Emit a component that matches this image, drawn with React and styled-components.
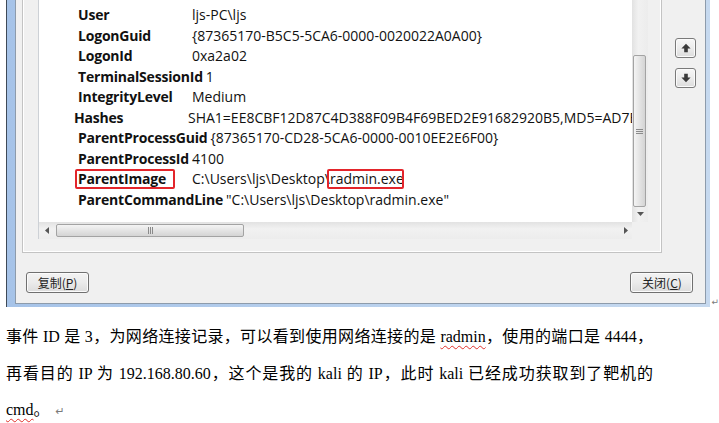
import React from 'react'
import styled, { createGlobalStyle } from 'styled-components'

const GlobalStyle = createGlobalStyle`
    html, body {
        margin: 0;
        padding: 0;
        background: #fff;
    }
    body {
        width: 719px;
        height: 423px;
        overflow: hidden;
    }
`

const Page = styled.div`
    width: 719px;
    height: 423px;
    overflow: hidden;
    background: #fff;
`

const WindowRow = styled.div`
    display: flex;
    align-items: flex-end;
    padding-left: 6px;
`

const Window = styled.div`
    width: 706px;
    height: 307px;
    box-sizing: border-box;
    display: flex;
    border-left: 1px solid #3f4a57;
    padding: 0 4px 3px 8px;
    background: linear-gradient(to right, #a6c3e8, #bcd3ee 60%, #c6d9ef);
`

const Client = styled.div`
    flex: 1;
    display: flex;
    flex-direction: column;
    background: #f0f0f0;
    border: 1px solid #8d9bab;
    border-top: none;
`

const Main = styled.div`
    display: flex;
    height: 253px;
`

const GroupBox = styled.div`
    width: 640px;
    margin-left: 6px;
    box-sizing: border-box;
    border: 1px solid #c3c3c3;
    border-top: none;
    box-shadow: inset 1px 0 0 #fff, inset -1px 0 0 #fff, inset 0 -1px 0 #fff;
    padding: 0 12px 13px 15px;
`

const TextBox = styled.div`
    width: 610px;
    height: 239px;
    box-sizing: border-box;
    display: grid;
    grid-template-columns: 1fr 16px;
    grid-template-rows: 1fr 17px;
    border-left: 1px solid #cdd1d6;
`

const Content = styled.div`
    background: #fff;
    overflow: hidden;
    padding: 5px 0 0 39px;
    font-family: "Open Sans", "Noto Sans", sans-serif;
    font-size: 14px;
    color: #111;
`

const Row = styled.div`
    display: flex;
    height: 20.5px;
    line-height: 20.5px;
    white-space: nowrap;
    margin-left: ${p => p.shift || 0}px;
`

const Label = styled.span`
    position: relative;
    font-weight: 700;
    min-width: ${p => p.min || 111}px;
    margin-right: 3px;
    letter-spacing: -0.2px;
`

const Value = styled.span`
    white-space: nowrap;
`

const Marked = styled.span`
    position: relative;
    &::after {
        content: '';
        position: absolute;
        left: ${p => p.left}px;
        width: ${p => p.w}px;
        top: 0;
        height: 20px;
        box-sizing: border-box;
        border: 2px solid #e3252b;
        border-radius: 2px;
    }
`

const VTrack = styled.div`
    position: relative;
    background: linear-gradient(to right, #e2e2e2, #f1f1f1 40%, #ececec);
`

const VThumb = styled.div`
    position: absolute;
    left: 1px;
    top: 55px;
    width: 13px;
    height: 152px;
    box-sizing: border-box;
    border: 1px solid #a3a3a3;
    border-radius: 2px;
    background: linear-gradient(to right, #f4f4f4, #e4e4e4 50%, #d4d4d4);
    display: flex;
    align-items: center;
    justify-content: center;
`

const HTrack = styled.div`
    position: relative;
    background: linear-gradient(#e2e2e2, #f1f1f1 40%, #ececec);
`

const HThumb = styled.div`
    position: absolute;
    top: 2px;
    left: 17px;
    width: 188px;
    height: 13px;
    box-sizing: border-box;
    border: 1px solid #a3a3a3;
    border-radius: 2px;
    background: linear-gradient(#f4f4f4, #e4e4e4 50%, #d4d4d4);
    display: flex;
    align-items: center;
    justify-content: center;
`

const Arrow = styled.svg`
    position: absolute;
    left: ${p => p.x}px;
    top: ${p => p.y}px;
`

const Corner = styled.div`
    background: #f0f0f0;
`

const Side = styled.div`
    flex: 1;
    display: flex;
    flex-direction: column;
    align-items: flex-start;
    gap: 10px;
    padding: 38px 0 0 13px;
`

const MoveButton = styled.div`
    width: 21px;
    height: 20px;
    box-sizing: border-box;
    border: 1px solid #7a7a7a;
    border-radius: 3px;
    background: linear-gradient(#f7f7f7, #ececec 50%, #dcdcdc);
    box-shadow: inset 0 0 0 1px #fbfbfb;
    display: flex;
    align-items: center;
    justify-content: center;
`

const Footer = styled.div`
    display: flex;
    justify-content: space-between;
    padding: 19px 12px 0 10px;
`

const Button = styled.div`
    width: 63px;
    height: 21px;
    box-sizing: border-box;
    border: 1px solid #707070;
    border-radius: 3px;
    background: linear-gradient(#f3f3f3, #ebebeb 50%, #dcdcdc);
    box-shadow: inset 0 0 0 1px #fbfbfb;
    font-family: "Noto Sans CJK SC", sans-serif;
    font-size: 12px;
    line-height: 19px;
    text-align: center;
    color: #222;
`

const Mark = styled.span`
    font-family: "DejaVu Sans", sans-serif;
    font-size: ${p => p.size || 10}px;
    color: #7a7a7a;
    line-height: 1;
    margin-left: ${p => p.gap || 0}px;
`

const Para = styled.div`
    margin-top: 12px;
    padding-left: 6px;
    width: 647px;
    font-family: "Liberation Serif", "Noto Sans CJK SC", serif;
    font-size: 16px;
    line-height: 36.5px;
    color: #000;
`

const Line = styled.div`
    text-align: ${p => (p.full ? 'justify' : 'left')};
    text-align-last: ${p => (p.full ? 'justify' : 'left')};
`

const Spell = styled.span`
    text-decoration: underline wavy #e0302a;
    text-decoration-thickness: 1px;
    text-underline-offset: 3px;
`

const UpIcon = ({ down }) => (
    <svg width="10" height="10" viewBox="0 0 10 10" style={down ? { transform: 'rotate(180deg)' } : undefined}>
        <path d="M5 0.8 L9.6 5.4 H6.8 V9.2 H3.2 V5.4 H0.4 Z" fill="#3a3a3a" />
    </svg>
)

const fields = [
    { k: 'User', v: 'ljs-PC\\ljs' },
    { k: 'LogonGuid', v: '{87365170-B5C5-5CA6-0000-0020022A0A00}' },
    { k: 'LogonId', v: '0xa2a02' },
    { k: 'TerminalSessionId', v: '1' },
    { k: 'IntegrityLevel', v: 'Medium' },
    { k: 'Hashes', v: 'SHA1=EE8CBF12D87C4D388F09B4F69BED2E91682920B5,MD5=AD7B3E1F6C0A9D24', shift: -4 },
    { k: 'ParentProcessGuid', v: '{87365170-CD28-5CA6-0000-0010EE2E6F00}' },
    { k: 'ParentProcessId', v: '4100' },
]

const App = () => {
    return (
        <Page>
            <GlobalStyle />
            <WindowRow>
                <Window>
                    <Client>
                        <Main>
                            <GroupBox>
                                <TextBox>
                                    <Content>
                                        {fields.map(f => (
                                            <Row key={f.k} shift={f.shift}>
                                                <Label>{f.k}</Label>
                                                <Value>{f.v}</Value>
                                            </Row>
                                        ))}
                                        <Row>
                                            <Label>
                                                <Marked left={-3} w={100}>ParentImage</Marked>
                                            </Label>
                                            <Value>
                                                C:\Users\ljs\Desktop\<Marked left={-3} w={77}>radmin.exe</Marked>
                                            </Value>
                                        </Row>
                                        <Row>
                                            <Label>ParentCommandLine</Label>
                                            <Value>"C:\Users\ljs\Desktop\radmin.exe"</Value>
                                        </Row>
                                    </Content>
                                    <VTrack>
                                        <VThumb>
                                            <svg width="7" height="5" viewBox="0 0 7 5">
                                                <path d="M0 0.5 H7 M0 2.5 H7 M0 4.5 H7" stroke="#8a8a8a" strokeWidth="1" />
                                            </svg>
                                        </VThumb>
                                        <Arrow x={5} y={212} width="7" height="4" viewBox="0 0 7 4">
                                            <path d="M0 0 H7 L3.5 4 Z" fill="#555" />
                                        </Arrow>
                                    </VTrack>
                                    <HTrack>
                                        <Arrow x={6} y={5} width="4" height="7" viewBox="0 0 4 7">
                                            <path d="M4 0 V7 L0 3.5 Z" fill="#555" />
                                        </Arrow>
                                        <HThumb>
                                            <svg width="5" height="7" viewBox="0 0 5 7">
                                                <path d="M0.5 0 V7 M2.5 0 V7 M4.5 0 V7" stroke="#8a8a8a" strokeWidth="1" />
                                            </svg>
                                        </HThumb>
                                        <Arrow x={585} y={5} width="4" height="7" viewBox="0 0 4 7">
                                            <path d="M0 0 V7 L4 3.5 Z" fill="#555" />
                                        </Arrow>
                                    </HTrack>
                                    <Corner />
                                </TextBox>
                            </GroupBox>
                            <Side>
                                <MoveButton><UpIcon /></MoveButton>
                                <MoveButton><UpIcon down /></MoveButton>
                            </Side>
                        </Main>
                        <Footer>
                            <Button>复制(<u>P</u>)</Button>
                            <Button>关闭(<u>C</u>)</Button>
                        </Footer>
                    </Client>
                </Window>
                <Mark gap={1} size={9}>↵</Mark>
            </WindowRow>
            <Para>
                <Line full>事件 ID 是 3，为网络连接记录，可以看到使用网络连接的是 <Spell>radmin</Spell>，使用的端口是 4444，</Line>
                <Line full>再看目的 IP 为 192.168.80.60，这个是我的 kali 的 IP，此时 kali 已经成功获取到了靶机的</Line>
                <Line><Spell>cmd</Spell>。<Mark gap={6} size={11}>↵</Mark></Line>
            </Para>
        </Page>
    )
}

export default App
